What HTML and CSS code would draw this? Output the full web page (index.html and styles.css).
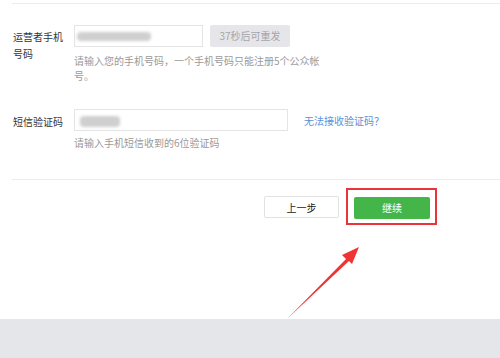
FILE: index.html
```html
<!DOCTYPE html>
<html lang="zh-CN">
<head>
  <meta charset="UTF-8">
  <title>注册</title>
  <link rel="stylesheet" href="styles.css">
</head>
<body>
  <div class="page">
    <div class="form">
      <!-- 手机号 -->
      <div class="row row-phone">
        <div class="label">运营者手机<br>号码</div>
        <div class="field">
          <div class="line">
            <div class="input input-phone"><span class="blur blur-phone"></span></div>
            <div class="btn-resend">37秒后可重发</div>
          </div>
          <p class="hint">请输入您的手机号码，一个手机号码只能注册5个公众帐<br>号。</p>
        </div>
      </div>
      <!-- 验证码 -->
      <div class="row row-code">
        <div class="label">短信验证码</div>
        <div class="field">
          <div class="line">
            <div class="input input-code"><span class="blur blur-code"></span></div>
            <a class="link" href="#">无法接收验证码？</a>
          </div>
          <p class="hint">请输入手机短信收到的6位验证码</p>
        </div>
      </div>
    </div>
    <div class="actions">
      <div class="btn btn-prev">上一步</div>
      <div class="mark">
        <div class="btn btn-next">继续</div>
      </div>
    </div>
    <svg class="arrow" width="80" height="80" viewBox="0 0 80 80">
      <path d="M4 77 L63 17 L59 13 L76 5 L69 22 L66 19 Z" fill="#f03434"/>
    </svg>
  </div>
  <div class="footer"></div>
</body>
</html>
```

FILE: styles.css
```css
body {
  margin: 0;
  padding: 0;
  background-color: #FFF;
  font-family: "Noto Sans CJK SC", "Noto Sans", sans-serif;
  font-size: 10px;
  color: #353535;
  height: 358px;
  display: flex;
  flex-direction: column;
}

.page {
  position: relative;
  height: 319px;
  padding-top: 3px;
  box-sizing: border-box;
}

.form {
  margin-left: 12px;
  padding-top: 21px;
  height: 177px;
  box-sizing: border-box;
  border-top: 1px solid #ECECEC;
  border-bottom: 1px solid #ECECEC;
}

.row {
  display: flex;
}

.row-code {
  margin-top: 26px;
}

.label {
  width: 61px;
  padding-left: 1px;
  padding-top: 3px;
  line-height: 17px;
  color: #353535;
}

.row-code .label {
  padding-top: 4px;
}

.line {
  display: flex;
  align-items: center;
}

.input {
  height: 22px;
  box-sizing: border-box;
  border: 1px solid #E4E4E4;
  background-color: #FFF;
  position: relative;
}

.input-phone {
  width: 129px;
}

.input-code {
  width: 214px;
}

.blur {
  position: absolute;
  top: 6px;
  height: 9px;
  background-color: #CFCFCF;
  border-radius: 4px;
  filter: blur(1.5px);
}

.blur-phone {
  left: 2px;
  width: 74px;
}

.blur-code {
  left: 5px;
  top: 6px;
  height: 11px;
  width: 40px;
}

.btn-resend {
  width: 80px;
  height: 22px;
  margin-left: 7px;
  line-height: 22px;
  text-align: center;
  background-color: #E6E6EA;
  color: #A5A5A8;
  border-radius: 2px;
}

.link {
  margin-left: 16px;
  color: #5D8FD6;
  text-decoration: none;
}

.hint {
  margin: 6px 0 0;
  line-height: 15px;
  color: #9A9A9A;
}

.row-code .hint {
  margin-top: 4px;
}

.actions {
  display: flex;
  align-items: center;
  padding-left: 264px;
  margin-top: 8px;
}

.btn {
  height: 22px;
  line-height: 22px;
  text-align: center;
  box-sizing: border-box;
  border-radius: 2px;
}

.btn-prev {
  width: 75px;
  border: 1px solid #E2E2E2;
  color: #222;
}

.mark {
  margin-left: 7px;
  padding: 7px 5px 4px 6px;
  border: 2px solid #E8353A;
}

.btn-next {
  width: 76px;
  background-color: #44B549;
  color: #FFF;
}

.arrow {
  position: absolute;
  left: 283px;
  top: 242px;
}

.footer {
  flex: 1;
  background-color: #E5E6E9;
}
```
